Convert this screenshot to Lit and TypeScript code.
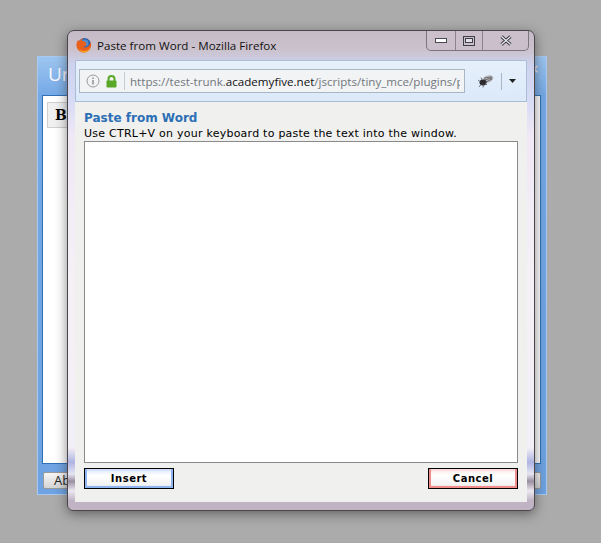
import { LitElement, html, css } from "lit";
import { customElement } from "lit/decorators.js";

@customElement("app-root")
export class AppRoot extends LitElement {
  static styles = css`
    :host {
      display: block;
      position: relative;
      width: 601px;
      height: 543px;
      overflow: hidden;
      background: #ababab;
      font-family: "DejaVu Sans", sans-serif;
    }

    /* dialog behind the popup */
    .back {
      position: absolute;
      left: 37px;
      top: 56px;
      width: 510px;
      height: 439px;
      box-sizing: border-box;
      background: linear-gradient(180deg, #9cc5f0 0%, #74a8e6 9%, #6ea2e2 100%);
      border: 1px solid #a9c9ee;
      display: flex;
      flex-direction: column;
      padding: 0 5px 5px 4px;
    }
    .back-title {
      height: 38px;
      box-sizing: border-box;
      padding: 4px 0 0 6px;
      font: 19px "Open Sans", sans-serif;
      color: #fbf8ff;
      display: flex;
      justify-content: space-between;
    }
    .back-close {
      font: bold 12px "DejaVu Sans", sans-serif;
      color: #e8eef8;
      padding: 1px 0 0 0;
      margin-right: 2px;
    }
    .back-body {
      flex: 1;
      background: #fff;
      border: 1px solid #2f6fb5;
      padding: 6px 0 0 4px;
    }
    .back-tool {
      width: 30px;
      height: 26px;
      box-sizing: border-box;
      border: 1px solid #cfcfcf;
      background: #f0f0f0;
      font: bold 14px "DejaVu Serif", serif;
      color: #000;
      padding-left: 7px;
      line-height: 24px;
    }
    .back-foot {
      height: 25px;
      display: flex;
      justify-content: space-between;
      padding: 8px 0 0 1px;
      box-sizing: border-box;
      flex: none;
    }
    .back-btn {
      width: 40px;
      height: 17px;
      box-sizing: border-box;
      border: 1px solid #9a9a9a;
      border-radius: 2px;
      background: linear-gradient(180deg, #f6f6f6, #d4d4d4);
      font: 13px/15px "Open Sans", sans-serif;
      padding-left: 10px;
      color: #222;
    }

    /* firefox popup */
    .win {
      position: absolute;
      left: 67px;
      top: 30px;
      width: 468px;
      height: 481px;
      box-sizing: border-box;
      border: 1px solid #4a464c;
      border-radius: 7px 7px 6px 6px;
      box-shadow: 0 3px 12px rgba(50, 50, 50, 0.6);
      background: linear-gradient(
        180deg,
        #c5bbc8 0,
        #cbc2cd 4%,
        #cdd2ee 7%,
        #d8dcf5 15%,
        #f0e8f5 22%,
        #f4f0f6 50%,
        #f3eff6 87%,
        #aeb4e2 90%,
        #e6e4f2 92.500%,
        #9a8fa0 94%,
        #ece8f0 96%,
        #c0b4c4 98%
      );
      padding: 29px 7px 8px 7px;
      display: flex;
      flex-direction: column;
    }
    .caption {
      position: absolute;
      left: 8px;
      top: 6px;
      display: flex;
      align-items: center;
      gap: 5px;
      font: 11.600px "Open Sans", sans-serif;
      color: #111;
    }
    .caption-btns {
      position: absolute;
      right: 5px;
      top: 0;
      width: 103px;
      height: 20px;
      box-sizing: border-box;
      display: grid;
      grid-template-columns: 29px 27px 1fr;
      border: 1px solid #7d7480;
      border-top: none;
      border-radius: 0 0 5px 5px;
      background: #cabfca;
    }
    .caption-btns > div {
      display: flex;
      align-items: center;
      justify-content: center;
      border-right: 1px solid #8b828e;
    }
    .caption-btns > div:last-child {
      border-right: none;
    }

    .chrome {
      height: 42px;
      box-sizing: border-box;
      border: 1px solid #a9bdd6;
      border-radius: 2px 2px 0 0;
      background: linear-gradient(180deg, #e6f0fb, #dbe9f9);
      display: flex;
      align-items: center;
      padding: 0 7px 0 3px;
      flex: none;
    }
    .url {
      width: 386px;
      height: 24px;
      box-sizing: border-box;
      flex: none;
      border: 1px solid #a9b6c4;
      background: #f1f3f5;
      display: flex;
      align-items: center;
      padding-left: 6px;
      font: 11.600px "Open Sans", sans-serif;
      color: #73777c;
      white-space: nowrap;
      overflow: hidden;
    }
    .url .sep {
      width: 1px;
      height: 18px;
      background: #c5ccd2;
      margin: 0 5px 0 7px;
      flex: none;
    }
    .url .clip {
      width: 330px;
      overflow: hidden;
      flex: none;
    }
    .url b {
      font-weight: 400;
      color: #111;
    }
    .tools {
      flex: 1;
      display: flex;
      align-items: center;
      padding-left: 13px;
    }
    .tools .sep {
      width: 1px;
      height: 17px;
      background: #a9b6c4;
      margin: 0 7px 0 7px;
    }

    .content {
      flex: 1;
      background: #f0f0ee;
      padding: 9px 9px 13px 9px;
      display: flex;
      flex-direction: column;
      min-height: 0;
    }
    .title {
      font: bold 12px/15px "DejaVu Sans", sans-serif;
      color: #2b6fb5;
    }
    .hint {
      font: 11px/13px "DejaVu Sans", sans-serif;
      letter-spacing: 0.24px;
      color: #000;
      margin: 1px 0 1px;
    }
    .area {
      flex: 1;
      background: #fff;
      border: 1px solid #8a8a8a;
    }
    .btns {
      display: flex;
      justify-content: space-between;
      margin-top: 5px;
    }
    .btn {
      width: 90px;
      height: 21px;
      box-sizing: border-box;
      border: 1px solid #000;
      font: bold 10px/19px "DejaVu Sans", sans-serif;
      letter-spacing: 0.5px;
      text-align: center;
      color: #000;
    }
    .insert {
      background: linear-gradient(180deg, #dde6fb, #fff 35%, #f2f2f2 85%, #a9c2f4);
      box-shadow: inset 2px 0 #8fb4f0, inset -2px 0 #8fb4f0, inset 0 -2px #8fb4f0, inset 0 2px #d5e0fa;
    }
    .cancel {
      background: linear-gradient(180deg, #fbe9e9, #fff 35%, #f2f2f2 85%, #f4a6a6);
      box-shadow: inset 2px 0 #f08c8c, inset -2px 0 #f08c8c, inset 0 -2px #f08c8c, inset 0 2px #fbdcdc;
    }
  `;

  render() {
    return html`
      <div class="back">
        <div class="back-title"><span>Ur</span><span class="back-close">×</span></div>
        <div class="back-body"><div class="back-tool">B</div></div>
        <div class="back-foot">
          <div class="back-btn">Ab</div>
          <div class="back-btn"></div>
        </div>
      </div>

      <div class="win">
        <div class="caption">
          <svg width="16" height="16" viewBox="0 0 16 16">
            <circle cx="8.500" cy="7.500" r="6.500" fill="#2d5ea8" />
            <circle cx="9" cy="6" r="3.500" fill="#4f8fd0" />
            <path d="M8 15.500A7.500 7.500 0 0 1 1 5c.3-1 .8-1.800 1.400-2.500 0 1 .3 1.600.7 2C3.800 3 5.500 1.500 7.500 1.200 6.500 2.200 6 3.200 6 4c1-.3 3 .2 4 1.800 1 2-.5 4-2.800 4.200 2 1 4.500.3 5.800-1.500.8-1.200 1.400-2.400 1.500-3.500.8 1.500.8 3 .5 4.500-.8 3.500-3.600 6-7 6z" fill="#e8601c" />
            <path d="M8 15.500c3.400 0 6.200-2.500 7-6-1 2.500-3.500 4.500-7 4.500-2.500 0-4.500-1-5.800-2.800C3.400 13.800 5.500 15.500 8 15.500z" fill="#f7a823" />
          </svg>
          <span>Paste from Word - Mozilla Firefox</span>
        </div>
        <div class="caption-btns">
          <div>
            <svg width="12" height="7" viewBox="0 0 12 7"><rect x="0.500" y="1.500" width="11" height="4" fill="#fff" stroke="#4a4a55" /></svg>
          </div>
          <div>
            <svg width="12" height="10" viewBox="0 0 12 10"><rect x="0.500" y="0.500" width="11" height="9" fill="none" stroke="#3f3f4a" /><rect x="2.500" y="2.500" width="7" height="4" fill="#e5e0e8" stroke="#3f3f4a" /></svg>
          </div>
          <div>
            <svg width="12" height="11" viewBox="0 0 12 11"><path d="M1.500 1.500 10.500 9.500M10.500 1.500 1.500 9.500" stroke="#3c3c46" stroke-width="3.200" /><path d="M1.500 1.500 10.500 9.500M10.500 1.500 1.500 9.500" stroke="#f0f0f2" stroke-width="1.200" /></svg>
          </div>
        </div>

        <div class="chrome">
          <div class="url">
            <svg width="14" height="14" viewBox="0 0 14 14">
              <circle cx="7" cy="7" r="6" fill="none" stroke="#9a9a9a" />
              <rect x="6.300" y="6" width="1.400" height="4.500" fill="#8a8a8a" />
              <rect x="6.300" y="3.500" width="1.400" height="1.500" fill="#8a8a8a" />
            </svg>
            <svg style="margin-left:6px" width="11" height="13" viewBox="0 0 11 13">
              <path d="M2.500 6V4a3 3 0 0 1 6 0v2" fill="none" stroke="#5ba829" stroke-width="2" />
              <rect x="0.500" y="5.500" width="10" height="7" rx="1" fill="#5ba829" />
            </svg>
            <div class="sep"></div>
            <div class="clip">https://test-trunk.<b>academyfive.net</b>/jscripts/tiny_mce/plugins/paste/pasteword.htm</div>
          </div>
          <div class="tools">
            <svg width="16" height="14" viewBox="0 0 16 14">
              <ellipse cx="10" cy="5" rx="5.500" ry="3.500" transform="rotate(-20 10 5)" fill="#b5b5ba" />
              <path d="M6 4l8-1M6 6l8-2M8 8l6-3" stroke="#5a5a60" stroke-width="0.800" fill="none" />
              <ellipse cx="5" cy="8.500" rx="3.500" ry="3" fill="#2c2c30" />
              <path d="M1 13l2-2.500M5 13.500l.5-3M0 6l2 1.500M3 3.500l1 2.500M9 11l-2-2" stroke="#55555a" stroke-width="0.800" fill="none" />
            </svg>
            <div class="sep"></div>
            <svg width="7" height="4" viewBox="0 0 7 4"><path d="M0 0h7L3.500 4z" fill="#222" /></svg>
          </div>
        </div>

        <div class="content">
          <div class="title">Paste from Word</div>
          <div class="hint">Use CTRL+V on your keyboard to paste the text into the window.</div>
          <div class="area"></div>
          <div class="btns">
            <div class="btn insert">Insert</div>
            <div class="btn cancel">Cancel</div>
          </div>
        </div>
      </div>
    `;
  }
}
